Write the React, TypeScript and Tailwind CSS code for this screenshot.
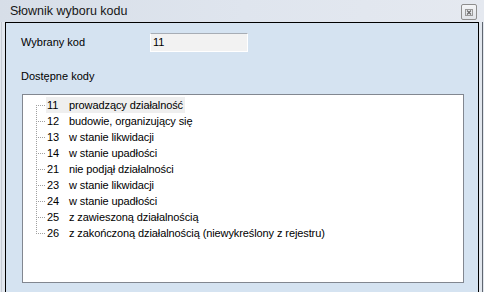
import React from 'react';

const codes: { code: string; label: string }[] = [
  { code: '11', label: 'prowadzący działalność' },
  { code: '12', label: 'budowie, organizujący się' },
  { code: '13', label: 'w stanie likwidacji' },
  { code: '14', label: 'w stanie upadłości' },
  { code: '21', label: 'nie podjął działalności' },
  { code: '23', label: 'w stanie likwidacji' },
  { code: '24', label: 'w stanie upadłości' },
  { code: '25', label: 'z zawieszoną działalnością' },
  { code: '26', label: 'z zakończoną działalnością (niewykreślony z rejestru)' },
];

const TreeConnector = ({ first, last }: { first: boolean; last: boolean }) => (
  <svg width="23" height="16" className="shrink-0" shapeRendering="crispEdges">
    <line
      x1="13.5"
      y1={first ? 8 : 0}
      x2="13.5"
      y2={last ? 9 : 16}
      stroke="#a0a0a0"
      strokeWidth="1"
      strokeDasharray="1 1"
    />
    <line x1="14" y1="8.5" x2="23" y2="8.5" stroke="#a0a0a0" strokeWidth="1" strokeDasharray="1 1" strokeDashoffset="1" />
  </svg>
);

export default function App() {
  return (
    <div
      className="w-[484px] h-[292px] flex flex-col overflow-hidden bg-[#e2e7ee] text-black"
      style={{ fontFamily: '"Liberation Sans", Arial, sans-serif' }}
    >
      {/* title bar */}
      <div className="h-[22px] shrink-0 flex items-center justify-between pl-[10px] pr-[7px] bg-gradient-to-r from-[#d7dee8] via-[#dfe5ee] to-[#e5e9f0]">
        <span className="text-[12.5px] text-[#161616] leading-none mt-px">Słownik wyboru kodu</span>
        <div className="w-[16px] h-[16px] mt-[2px] rounded-[2px] border border-[#8e8e8e] bg-gradient-to-b from-[#f4f5f7] to-[#e1e4e9] flex items-center justify-center">
          <svg width="8" height="7" viewBox="0 0 8 7" shapeRendering="crispEdges">
            <rect x="0.5" y="0.5" width="7" height="6" fill="none" stroke="#9a9a9a" strokeWidth="1" />
            <path d="M2 1.5 L6 5.5 M6 1.5 L2 5.5" stroke="#6a6a6a" strokeWidth="1.2" shapeRendering="auto" />
          </svg>
        </div>
      </div>

      {/* frame body */}
      <div className="flex flex-1 min-h-0 ml-px border-l border-[#c6ccd4] pl-[3px]">
        <div className="w-[474px] border-l border-t border-r border-black bg-[#d5e3f1] flex flex-col">
          <div className="flex items-center mt-[10px] pl-[15px]">
            <span className="w-[129px] text-[11px]">Wybrany kod</span>
            <div className="w-[98px] h-[19px] bg-[#f2f2f2] border-t border-t-[#a7adb5] border-x border-b border-x-white border-b-white flex items-center pl-[2px] text-[11px]">
              11
            </div>
          </div>

          <div className="pl-[15px] mt-[18px] text-[11px] leading-[13px]">Dostępne kody</div>

          <div className="ml-[16px] mt-[11px] w-[442px] h-[189px] border border-[#828790] bg-white pt-[2px] text-[11px] tracking-[-0.1px]">
            {codes.map((c, i) => (
              <div key={c.code} className="flex items-center h-[16px]">
                <TreeConnector first={i === 0} last={i === codes.length - 1} />
                <div className={`flex items-center h-[16px] pl-px pr-[2px] ${i === 0 ? 'bg-[#efefef]' : ''}`}>
                  <span className="w-[22px]">{c.code}</span>
                  <span>{c.label}</span>
                </div>
              </div>
            ))}
          </div>
        </div>
        <div className="w-[4px] border-r border-[#5f6670]" />
      </div>
    </div>
  );
}
